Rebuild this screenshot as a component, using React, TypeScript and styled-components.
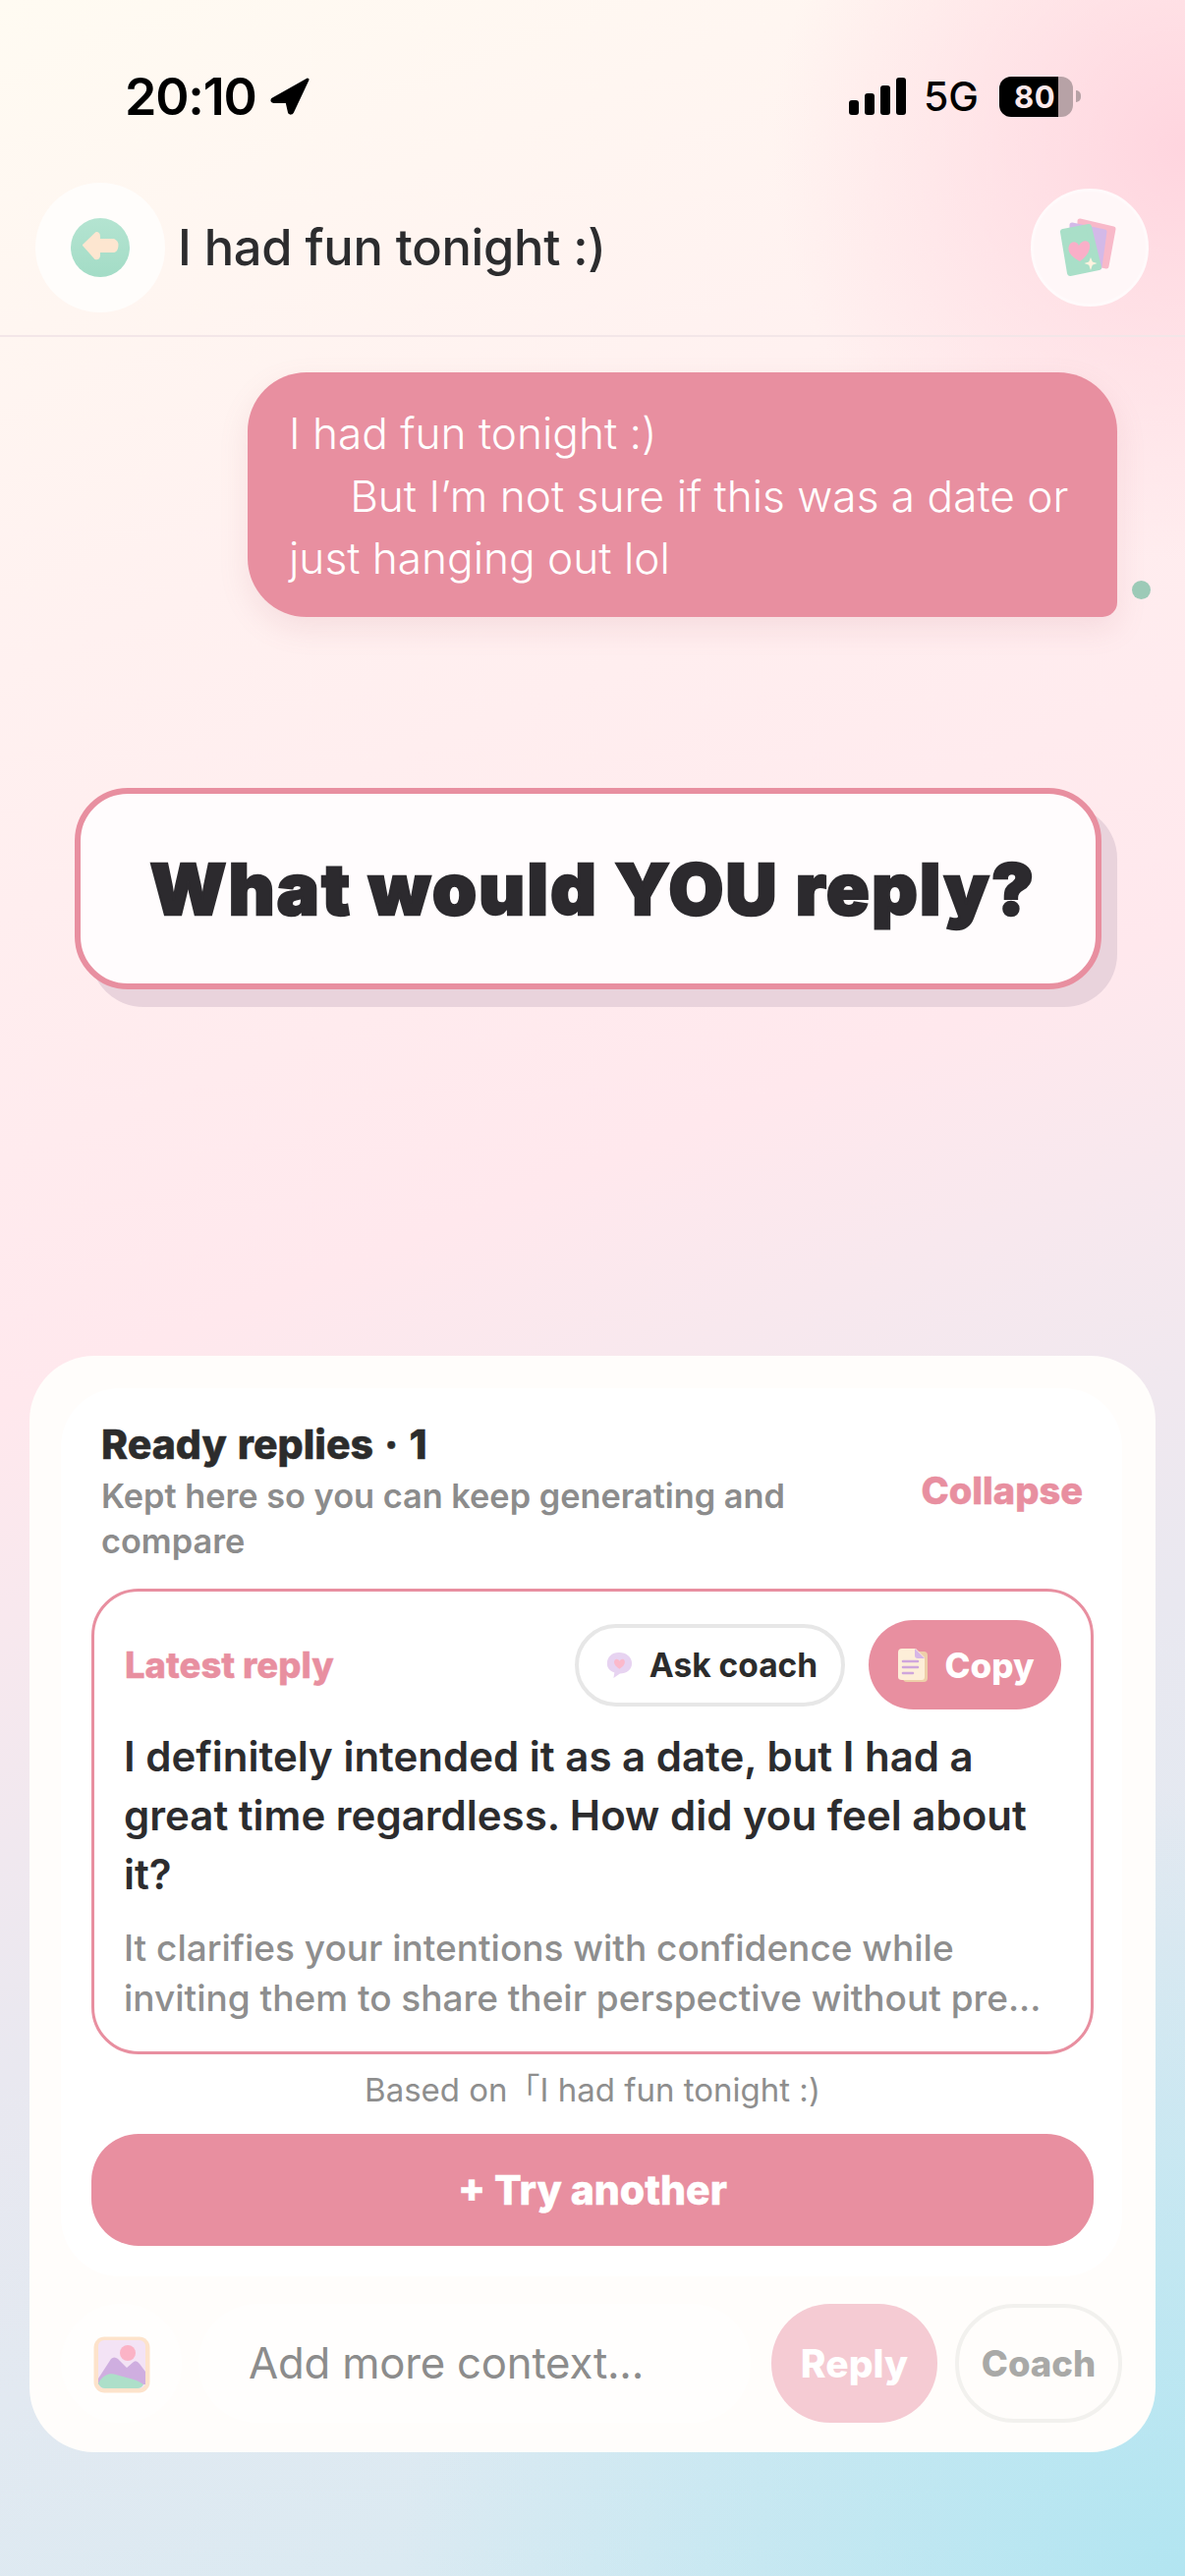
import React from "react";
import styled, { createGlobalStyle } from "styled-components";

const Global = createGlobalStyle`
  html, body { margin: 0; padding: 0; }
  body { font-family: Inter, "Noto Sans CJK JP", sans-serif; }
  * { box-sizing: border-box; }
`;

const Page = styled.div`
  width: 1206px;
  height: 2622px;
  display: flex;
  flex-direction: column;
  overflow: hidden;
  background:
    radial-gradient(circle 420px at 100% 150px, rgba(255, 210, 221, 0.9), rgba(255, 210, 221, 0) 100%),
    radial-gradient(circle 800px at 100% 100%, #b2e5f1, rgba(178, 229, 241, 0) 100%),
    linear-gradient(158deg, #fffbf2 0%, #fff1f0 22%, #ffe8ed 46%, #e9e8f0 68%, #d4ebf3 100%);
`;

const StatusBar = styled.div`
  height: 186px;
  padding: 77px 106px 0 127px;
  display: flex;
  justify-content: space-between;
  align-items: flex-start;
  color: #000;
`;
const StatusGroup = styled.div`
  display: flex;
  align-items: center;
  height: 42px;
`;
const Time = styled.span`
  font-size: 52px;
  font-weight: 600;
  letter-spacing: -1.2px;
  margin-right: 14px;
`;
const Network = styled.span`
  font-size: 41px;
  font-weight: 500;
  margin: 0 21px 0 18px;
`;
const Battery = styled.span`
  width: 75px;
  height: 41px;
  border-radius: 12px;
  background: linear-gradient(90deg, #000 0 60px, #b7a2a6 60px);
  color: #fde9ec;
  font-size: 31px;
  font-weight: 700;
  letter-spacing: 0.5px;
  display: flex;
  align-items: center;
  padding-left: 15px;
`;
const BatteryTip = styled.span`
  width: 5px;
  height: 12px;
  margin-left: 3px;
  border-radius: 0 6px 6px 0;
  background: #b7a2a6;
`;

const Header = styled.header`
  height: 157px;
  padding: 0 37px 24px 36px;
  display: flex;
  align-items: center;
  border-bottom: 2px solid #f3e6e8;
`;
const BackButton = styled.div`
  width: 132px;
  height: 132px;
  border-radius: 50%;
  background: #fffdfb;
  display: flex;
  align-items: center;
  justify-content: center;
`;
const Title = styled.h1`
  flex: 1;
  margin: 0 0 0 13px;
  font-size: 50.6px;
  font-weight: 500;
  letter-spacing: -0.3px;
  color: #2c2c2e;
`;
const CardsButton = styled.div`
  width: 120px;
  height: 120px;
  border-radius: 50%;
  background: #fff7f8;
  border: 3px solid #fffafb;
  display: flex;
  align-items: center;
  justify-content: center;
`;

const BubbleRow = styled.div`
  padding: 36px 35px 0 0;
  display: flex;
  justify-content: flex-end;
  align-items: flex-end;
  gap: 15px;
`;
const Bubble = styled.div`
  width: 885px;
  padding: 31px 20px 27px 42px;
  border-radius: 60px 60px 15px 60px;
  background: #e88fa0;
  color: #fff;
  font-size: 44.2px;
  font-weight: 350;
  line-height: 63.5px;
  white-space: pre-wrap;
  box-shadow: 0 12px 30px rgba(190, 110, 130, 0.14);
`;
const SentDot = styled.span`
  width: 19px;
  height: 19px;
  margin-bottom: 18px;
  border-radius: 50%;
  background: #9ccab7;
`;

const Prompt = styled.div`
  margin: 174px 0 0 76px;
  width: 1045px;
  height: 205px;
  padding-left: 10px;
  border: 6px solid #e88fa0;
  border-radius: 54px;
  background: #fffcfd;
  box-shadow: 16px 18px 0 #e9d3dc;
  display: flex;
  align-items: center;
  justify-content: center;
  font-size: 72px;
  font-weight: 900;
  letter-spacing: 2.4px;
  -webkit-text-stroke: 2.4px #2c2a2e;
  color: #2c2a2e;
`;

const Panel = styled.section`
  margin: auto 30px 126px;
  padding: 33px 34px 30px 32px;
  border-radius: 66px;
  background: #fffdfb;
  display: flex;
  flex-direction: column;
  gap: 28px;
`;
const ReadyCard = styled.div`
  padding: 32px 29px 31px 31px;
  border-radius: 60px;
  background: #fff;
  display: flex;
  flex-direction: column;
`;
const ReadyHead = styled.div`
  padding: 0 11px 0 10px;
  display: flex;
  align-items: center;
  justify-content: space-between;
  gap: 60px;
`;
const ReadyTitle = styled.div`
  font-size: 41px;
  font-weight: 800;
  line-height: 50px;
  margin-bottom: 5px;
  word-spacing: 2px;
  -webkit-text-stroke: 0.5px #2c2c2c;
  color: #2c2c2c;
`;
const ReadySub = styled.div`
  font-size: 34.3px;
  font-weight: 600;
  line-height: 45.5px;
  color: #8c8c8c;
`;
const Collapse = styled.span`
  flex: none;
  margin-bottom: 3px;
  font-size: 38px;
  font-weight: 800;
  -webkit-text-stroke: 0.5px #e88fa0;
  color: #e88fa0;
`;

const ReplyCard = styled.article`
  margin-top: 26px;
  padding: 29px 30px 29px 30px;
  border: 3px solid #e88fa0;
  border-radius: 48px;
  background: #fff;
`;
const ReplyHead = styled.div`
  display: flex;
  align-items: center;
  height: 91px;
  gap: 24px;
`;
const LatestLabel = styled.span`
  flex: 1;
  padding-left: 1px;
  font-size: 36.4px;
  font-weight: 800;
  -webkit-text-stroke: 0.4px #e88fa0;
  color: #e88fa0;
`;
const Pill = styled.span<{ $filled?: boolean }>`
  display: flex;
  align-items: center;
  justify-content: center;
  gap: 17px;
  padding-left: 3px;
  border-radius: 46px;
  font-size: ${(p) => (p.$filled ? "35px" : "33.5px")};
  font-weight: ${(p) => (p.$filled ? 800 : 700)};
  height: ${(p) => (p.$filled ? "91px" : "84px")};
  width: ${(p) => (p.$filled ? "196px" : "275px")};
  color: ${(p) => (p.$filled ? "#fff" : "#2c2c2c")};
  background: ${(p) => (p.$filled ? "#e88fa0" : "#fff")};
  border: ${(p) => (p.$filled ? "0" : "4px solid #e7e7e7")};
`;
const ReplyText = styled.p`
  margin: 18px 0 0;
  font-size: 42px;
  font-weight: 600;
  line-height: 60px;
  color: #2c2c2e;
`;
const Reason = styled.p`
  margin: 19px 0 0;
  font-size: 37px;
  font-weight: 500;
  line-height: 51px;
  color: #8e8e8e;
`;
const BasedOn = styled.div`
  margin-top: 16px;
  text-align: center;
  font-size: 33px;
  line-height: 40px;
  color: #8e8e8e;
`;
const TryButton = styled.div`
  margin-top: 25px;
  height: 114px;
  border-radius: 48px;
  background: #e88fa0;
  color: #fff;
  font-size: 41px;
  font-weight: 800;
  -webkit-text-stroke: 0.5px #fff;
  display: flex;
  align-items: center;
  justify-content: center;
`;

const Composer = styled.div`
  height: 121px;
  display: flex;
  align-items: stretch;
`;
const AttachButton = styled.div`
  width: 123px;
  border-radius: 60px;
  background: #fffefd;
  display: flex;
  align-items: center;
  justify-content: center;
  padding-top: 2px;
`;
const Input = styled.div`
  width: 562px;
  margin: 0 21px 0 17px;
  padding-left: 51px;
  border-radius: 60px;
  background: #fffefd;
  display: flex;
  align-items: center;
  font-size: 43.7px;
  letter-spacing: -0.2px;
  color: #8c8c8c;
`;
const ActionButton = styled.div<{ $primary?: boolean }>`
  width: ${(p) => (p.$primary ? "169px" : "170px")};
  margin-left: ${(p) => (p.$primary ? "0" : "18px")};
  border-radius: 60px;
  display: flex;
  align-items: center;
  justify-content: center;
  font-size: ${(p) => (p.$primary ? "39px" : "36.5px")};
  font-weight: 800;
  color: ${(p) => (p.$primary ? "#fff" : "#a9a9a7")};
  background: ${(p) => (p.$primary ? "#f5cbd3" : "transparent")};
  border: ${(p) => (p.$primary ? "0" : "4px solid #f2f1ee")};
`;

const BackIcon = () => (
  <svg width="60" height="60" viewBox="0 0 60 60">
    <defs>
      <linearGradient id="bg1" x1="0" y1="0" x2="0" y2="1">
        <stop offset="0" stopColor="#b4e4d1" />
        <stop offset="1" stopColor="#a3dcc6" />
      </linearGradient>
    </defs>
    <circle cx="30" cy="30" r="30" fill="url(#bg1)" />
    <path d="M13 27.5 L26 15 Q29 15 29 19 L29 22 L44 22 Q47.5 24 47.5 27 Q47.5 33 44 34 L29 34 L29 38 Q29 42 25 41 Z" fill="#fde6d0" stroke="#fde6d0" strokeWidth="2" strokeLinejoin="round" />
  </svg>
);

const CardsIcon = () => (
  <svg width="60" height="62" viewBox="0 0 60 62">
    <path d="M20 4 L54 12 L47 50 L20 44 Z" fill="#f8b9c9" stroke="#f8b9c9" strokeWidth="5" strokeLinejoin="round" />
    <path d="M12 8 L45 15 L40 51 L12 44 Z" fill="#d3b9e8" stroke="#d3b9e8" strokeWidth="5" strokeLinejoin="round" />
    <path d="M3 15 L29 10 L39 51 L10 57 Z" fill="#a9dfc8" stroke="#a9dfc8" strokeWidth="6" strokeLinejoin="round" />
    <path d="M20 45 C10 40 7 34 9 29 C11 24 17 24 19 29 C22 23 29 23 30 28 C31 34 27 40 20 45 Z" fill="#f9afc8" />
    <path d="M31 41 L32.8 45.4 L37.5 47 L32.8 48.8 L31 54 L29.2 48.8 L24.5 47 L29.2 45.4 Z" fill="#fff3df" />
  </svg>
);

const LocationIcon = () => (
  <svg width="40" height="38" viewBox="0 0 40 38">
    <path d="M38 2 L2.5 22 Q1 24 4 24.5 L17 24.5 L19.5 35.5 Q21 37 22.5 35 Z" fill="#000" stroke="#000" strokeWidth="3" strokeLinejoin="round" />
  </svg>
);

const SignalIcon = () => (
  <svg width="58" height="38" viewBox="0 0 58 38">
    <rect x="0" y="23" width="10" height="15" rx="3" fill="#000" />
    <rect x="16" y="16" width="10" height="22" rx="3" fill="#000" />
    <rect x="32" y="8" width="10" height="30" rx="3" fill="#000" />
    <rect x="48" y="0" width="10" height="38" rx="3" fill="#000" />
  </svg>
);

const CoachIcon = () => (
  <svg width="28" height="28" viewBox="0 0 30 30">
    <path d="M15 1 C23 1 29 6 29 13 C29 20 23 24 16 24 L9 29 L10 23 C5 21 2 18 2 13 C2 6 7 1 15 1 Z" fill="#e7d3f1" />
    <path d="M15.5 19 C10 15.5 9 12.5 10 10 C11.5 7.5 14.5 8 15.5 10.5 C17 8 20 7.5 21 10 C22 12.5 20.5 16 15.5 19 Z" fill="#fbb9cb" />
  </svg>
);

const CopyIcon = () => (
  <svg width="30" height="34" viewBox="0 0 30 34">
    <rect x="5" y="3" width="25" height="31" rx="4" fill="#eecfa9" />
    <path d="M4 0 L18 0 L27 9 L27 29 Q27 32 24 32 L4 32 Q0 32 0 29 L0 4 Q0 0 4 0 Z" fill="#fdeed8" />
    <path d="M17 0 L27 10 L20 10 Q17 10 17 7 Z" fill="#d7b6e6" />
    <path d="M5 13 H20 M5 19 H20 M5 25 H15" stroke="#cfa6dc" strokeWidth="2.6" strokeLinecap="round" />
  </svg>
);

const ImageIcon = () => (
  <svg width="60" height="60" viewBox="0 0 60 60">
    <rect x="1.5" y="1.5" width="57" height="57" rx="11" fill="#fde3cb" />
    <rect x="6" y="5" width="48" height="49" rx="6" fill="#f3e3f5" />
    <circle cx="36" cy="18" r="8" fill="#fbb3c6" />
    <path d="M6 44 L19 24 Q22 21 26 24 L35 33 L42 27 Q45 25 48 29 L54 37 L54 50 L6 50 Z" fill="#cfaee0" />
    <path d="M6 49 C11 39 19 38 24 40 C33 43 44 44 52 50 Q50 54 46 54 L13 54 Q8 54 6 49 Z" fill="#addfc9" />
  </svg>
);

export default function App() {
  return (
    <Page>
      <Global />
      <StatusBar>
        <StatusGroup>
          <Time>20:10</Time>
          <LocationIcon />
        </StatusGroup>
        <StatusGroup>
          <SignalIcon />
          <Network>5G</Network>
          <Battery>80</Battery>
          <BatteryTip />
        </StatusGroup>
      </StatusBar>

      <Header>
        <BackButton>
          <BackIcon />
        </BackButton>
        <Title>I had fun tonight :)</Title>
        <CardsButton>
          <CardsIcon />
        </CardsButton>
      </Header>

      <BubbleRow>
        <Bubble>{"I had fun tonight :)\n     But I’m not sure if this was a date or just hanging out lol"}</Bubble>
        <SentDot />
      </BubbleRow>

      <Prompt>What would YOU reply?</Prompt>

      <Panel>
        <ReadyCard>
          <ReadyHead>
            <div>
              <ReadyTitle>Ready replies · 1</ReadyTitle>
              <ReadySub>Kept here so you can keep generating and compare</ReadySub>
            </div>
            <Collapse>Collapse</Collapse>
          </ReadyHead>

          <ReplyCard>
            <ReplyHead>
              <LatestLabel>Latest reply</LatestLabel>
              <Pill>
                <CoachIcon />
                Ask coach
              </Pill>
              <Pill $filled>
                <CopyIcon />
                Copy
              </Pill>
            </ReplyHead>
            <ReplyText>I definitely intended it as a date, but I had a great time regardless. How did you feel about it?</ReplyText>
            <Reason>It clarifies your intentions with confidence while inviting them to share their perspective without pre...</Reason>
          </ReplyCard>

          <BasedOn>Based on「I had fun tonight :)</BasedOn>
          <TryButton>+ Try another</TryButton>
        </ReadyCard>

        <Composer>
          <AttachButton>
            <ImageIcon />
          </AttachButton>
          <Input>Add more context...</Input>
          <ActionButton $primary>Reply</ActionButton>
          <ActionButton>Coach</ActionButton>
        </Composer>
      </Panel>
    </Page>
  );
}
